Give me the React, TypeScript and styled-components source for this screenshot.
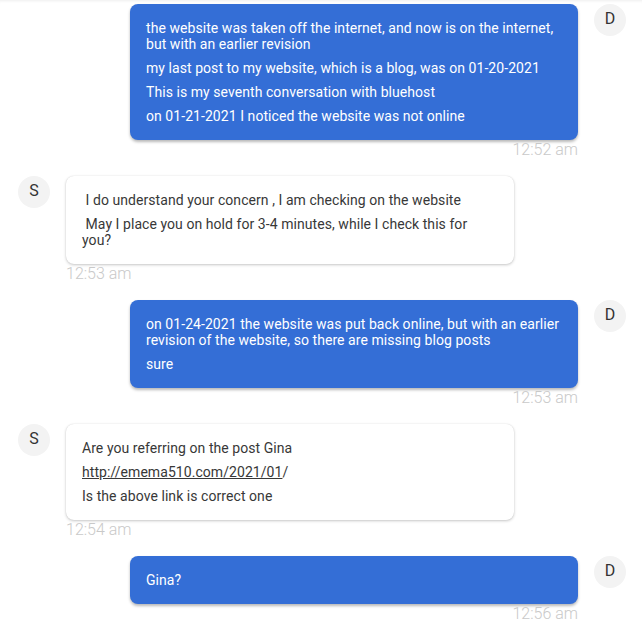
import React from "react";
import styled, { createGlobalStyle } from "styled-components";

const GlobalStyle = createGlobalStyle`
  html, body { margin: 0; padding: 0; background: #ffffff; }
  body { font-family: Roboto, "Liberation Sans", Arial, sans-serif; }
`;

const Chat = styled.div`
  width: 642px;
  height: 628px;
  overflow: hidden;
  box-sizing: border-box;
  padding-top: 4px;
  display: flex;
  flex-direction: column;
  gap: 17px;
  box-shadow: inset 0 3px 3px -2px rgba(0, 0, 0, 0.07);
`;

const Row = styled.div<{ $mine: boolean }>`
  display: flex;
  align-items: flex-start;
  gap: 16px;
  justify-content: ${(p) => (p.$mine ? "flex-end" : "flex-start")};
  padding: ${(p) => (p.$mine ? "0 16px 0 0" : "0 0 0 18px")};
`;

const Avatar = styled.div`
  width: 32px;
  height: 32px;
  border-radius: 50%;
  background: #f3f3f3;
  color: #333333;
  font-size: 16px;
  display: flex;
  align-items: center;
  justify-content: center;
  flex-shrink: 0;
  line-height: 1;
  padding-bottom: 3px;
  box-sizing: border-box;
`;

const Column = styled.div<{ $mine: boolean }>`
  display: flex;
  flex-direction: column;
  align-items: ${(p) => (p.$mine ? "flex-end" : "flex-start")};
  width: 448px;
`;

const Bubble = styled.div<{ $mine: boolean }>`
  width: 100%;
  box-sizing: border-box;
  padding: 16px;
  border-radius: 8px;
  font-size: 14px;
  letter-spacing: 0.06px;
  line-height: normal;
  white-space: pre-wrap;
  display: flex;
  flex-direction: column;
  gap: 8px;
  background: ${(p) => (p.$mine ? "#346ed6" : "#ffffff")};
  color: ${(p) => (p.$mine ? "#ffffff" : "#383838")};
  box-shadow: ${(p) =>
    p.$mine
      ? "0 2px 3px rgba(0, 0, 0, 0.28)"
      : "0 1px 3px rgba(0, 0, 0, 0.22), 0 0 1px rgba(0, 0, 0, 0.12)"};
`;

const Para = styled.div``;

const Link = styled.a`
  color: inherit;
  text-decoration: underline;
`;

const Time = styled.div`
  font-size: 16px;
  font-weight: 300;
  color: #c9c9c9;
  line-height: 19px;
`;

type Msg = {
  mine: boolean;
  time: string;
  parts: React.ReactNode[];
};

const messages: Msg[] = [
  {
    mine: true,
    time: "12:52 am",
    parts: [
      "the website was taken off the internet, and now is on the internet, but with an earlier revision",
      "my last post to my website, which is a blog, was on 01-20-2021",
      "This is my seventh conversation with bluehost",
      "on 01-21-2021 I noticed the website was not online",
    ],
  },
  {
    mine: false,
    time: "12:53 am",
    parts: [
      " I do understand your concern , I am checking on the website",
      " May I place you on hold for 3-4 minutes, while I check this for you?",
    ],
  },
  {
    mine: true,
    time: "12:53 am",
    parts: [
      "on 01-24-2021 the website was put back online, but with an earlier revision of the website, so there are missing blog posts",
      "sure",
    ],
  },
  {
    mine: false,
    time: "12:54 am",
    parts: [
      "Are you referring on the post Gina",
      <>
        <Link href="#">http://emema510.com/2021/01</Link>/
      </>,
      "Is the above link is correct one",
    ],
  },
  {
    mine: true,
    time: "12:56 am",
    parts: ["Gina?"],
  },
];

export default function App() {
  return (
    <>
      <GlobalStyle />
      <Chat>
        {messages.map((m, i) => (
          <Row key={i} $mine={m.mine}>
            {!m.mine && <Avatar>S</Avatar>}
            <Column $mine={m.mine}>
              <Bubble $mine={m.mine}>
                {m.parts.map((p, j) => (
                  <Para key={j}>{p}</Para>
                ))}
              </Bubble>
              <Time>{m.time}</Time>
            </Column>
            {m.mine && <Avatar>D</Avatar>}
          </Row>
        ))}
      </Chat>
    </>
  );
}
